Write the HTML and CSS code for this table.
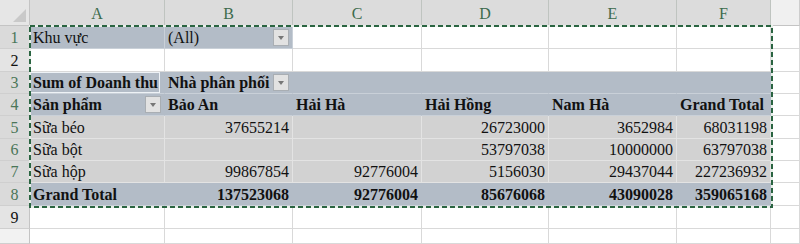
FILE: index.html
```html
<!DOCTYPE html>
<html lang="vi">
<head>
    <meta charset="utf-8">
    <title>Pivot - Doanh thu</title>
    <link rel="stylesheet" href="styles.css">
</head>
<body>
<div class="wrap">
    <div class="sheet">
        <!-- column headers -->
        <div class="c corner"><span class="tri"></span></div>
        <div class="c hd sel">A</div>
        <div class="c hd sel">B</div>
        <div class="c hd sel">C</div>
        <div class="c hd sel">D</div>
        <div class="c hd sel">E</div>
        <div class="c hd sel">F</div>
        <div class="c hd"></div>

        <!-- row 1: report filter -->
        <div class="c rn sel">1</div>
        <div class="c pv">Khu vực</div>
        <div class="c pv">(All)<span class="dd"></span></div>
        <div class="c"></div><div class="c"></div><div class="c"></div><div class="c"></div><div class="c"></div>

        <!-- row 2 -->
        <div class="c rn dark">2</div>
        <div class="c"></div><div class="c"></div><div class="c"></div><div class="c"></div><div class="c"></div><div class="c"></div><div class="c"></div>

        <!-- row 3 -->
        <div class="c rn sel">3</div>
        <div class="c pv b flat"><span class="active">Sum of Doanh thu</span></div>
        <div class="c pv b flat">Nhà phân phối<span class="dd"></span></div>
        <div class="c pv flat"></div><div class="c pv flat"></div><div class="c pv flat"></div><div class="c pv flat"></div>
        <div class="c"></div>

        <!-- row 4: column labels -->
        <div class="c rn sel">4</div>
        <div class="c pv b flat">Sản phẩm<span class="dd"></span></div>
        <div class="c pv b flat">Bảo An</div>
        <div class="c pv b flat">Hải Hà</div>
        <div class="c pv b flat">Hải Hồng</div>
        <div class="c pv b flat">Nam Hà</div>
        <div class="c pv b flat">Grand Total</div>
        <div class="c"></div>

        <!-- rows 5-7: values -->
        <div class="c rn sel">5</div>
        <div class="c pb">Sữa béo</div>
        <div class="c pb num">37655214</div>
        <div class="c pb num"></div>
        <div class="c pb num">26723000</div>
        <div class="c pb num">3652984</div>
        <div class="c pb num">68031198</div>
        <div class="c"></div>

        <div class="c rn sel">6</div>
        <div class="c pb">Sữa bột</div>
        <div class="c pb num"></div>
        <div class="c pb num"></div>
        <div class="c pb num">53797038</div>
        <div class="c pb num">10000000</div>
        <div class="c pb num">63797038</div>
        <div class="c"></div>

        <div class="c rn sel">7</div>
        <div class="c pb">Sữa hộp</div>
        <div class="c pb num">99867854</div>
        <div class="c pb num">92776004</div>
        <div class="c pb num">5156030</div>
        <div class="c pb num">29437044</div>
        <div class="c pb num">227236932</div>
        <div class="c"></div>

        <!-- row 8: totals -->
        <div class="c rn sel">8</div>
        <div class="c pv b flat">Grand Total</div>
        <div class="c pv b flat num">137523068</div>
        <div class="c pv b flat num">92776004</div>
        <div class="c pv b flat num">85676068</div>
        <div class="c pv b flat num">43090028</div>
        <div class="c pv b flat num">359065168</div>
        <div class="c"></div>

        <!-- row 9 -->
        <div class="c rn dark">9</div>
        <div class="c"></div><div class="c"></div><div class="c"></div><div class="c"></div><div class="c"></div><div class="c"></div><div class="c"></div>

        <div class="c rn blank"></div>
        <div class="c"></div><div class="c"></div><div class="c"></div><div class="c"></div><div class="c"></div><div class="c"></div><div class="c"></div>
    </div>

    <!-- copy marquee around A1:F8 -->
    <svg class="ants" width="745" height="184" viewBox="0 0 745 184">
        <rect x="1" y="1" width="742" height="181" fill="none" stroke="#e8efe9" stroke-width="2"/>
        <rect x="1" y="1" width="742" height="181" fill="none" stroke="#2a6441" stroke-width="2" stroke-dasharray="5 3"/>
    </svg>
</div>
</body>
</html>
```

FILE: styles.css
```css
* {
    box-sizing: border-box;
}
body {
    margin: 0;
    background: #fff;
}
.wrap {
    position: relative;
    width: 800px;
    height: 244px;
    overflow: hidden;
    font-family: "Liberation Serif", serif;
    font-size: 16px;
    color: #111;
}
.sheet {
    display: grid;
    grid-template-columns: 30px 135px 128px 129px 127px 128px 94px 29px;
    grid-template-rows: 26px 23px 23px 22px 22px 23px 22px 22px 23px 23px 15px;
    height: 244px;
}
.c {
    display: flex;
    align-items: flex-end;
    padding: 0 3px 1px 3px;
    border-right: 1px solid #d9d9d9;
    border-bottom: 1px solid #d9d9d9;
    white-space: nowrap;
    overflow: hidden;
}

/* headers */
.corner {
    position: relative;
    background: #e6e6e6;
    border-right: 1px solid #c4c4c4;
    border-bottom: 1px solid #c4c4c4;
}
.corner .tri {
    position: absolute;
    right: 3px;
    bottom: 3px;
    border-left: 13px solid transparent;
    border-bottom: 13px solid #c9c9c9;
}
.hd {
    justify-content: center;
    align-items: center;
    padding: 2px 0 0 0;
    background: #f0f0f0;
    color: #333;
    border-right: 1px solid #cdcdcd;
    border-bottom: 1px solid #c4c4c4;
}
.hd.sel {
    background: #dcdcdc;
    color: #3d6b4d;
    border-right: 1px solid #bfc4c0;
}
.rn {
    justify-content: center;
    align-items: center;
    padding: 1px 0 0 0;
    background: #e4e4e4;
    color: #333;
    border-right: 1px solid #c4c4c4;
    border-bottom: 1px solid #cfcfcf;
}
.rn.sel {
    background: #dadada;
    color: #4a7658;
}
.rn.dark {
    color: #111;
}
.rn.blank {
    background: #f2f2f2;
}

/* pivot table */
.pv {
    background: #b3bcc7;
    border-right: 1px solid #c9d0d8;
    border-bottom: 1px solid #c9d0d8;
}
.pv.flat {
    border-right-color: #b3bcc7;
}
.pb {
    background: #d2d2d2;
    border-right: 1px solid #e3e3e3;
    border-bottom: 1px solid #e3e3e3;
}
.b {
    font-weight: bold;
}
.num {
    justify-content: flex-end;
}
.active {
    margin: 0 -2px -1px -3px;
    padding: 0 1px 0 2px;
    border: 1px solid #eef2f6;
    line-height: 19px;
}
.dd {
    position: relative;
    width: 16px;
    height: 17px;
    margin-left: auto;
    margin-bottom: 1px;
    background: #e2e2e2;
    border: 1px solid #a9aeb3;
}
.dd::after {
    content: "";
    position: absolute;
    left: 4px;
    top: 6px;
    border-left: 3px solid transparent;
    border-right: 3px solid transparent;
    border-top: 4px solid #777;
}

/* marquee */
.ants {
    position: absolute;
    left: 29px;
    top: 25px;
}
```
